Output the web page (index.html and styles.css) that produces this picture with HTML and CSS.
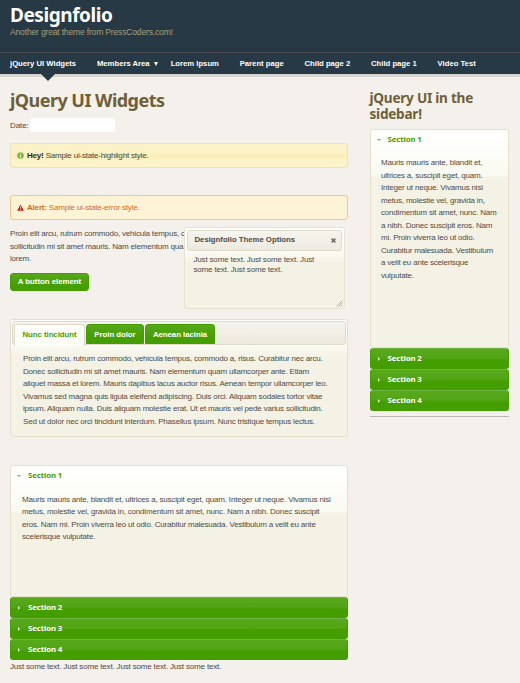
FILE: index.html
```html
<!DOCTYPE html>
<html lang="en">
<head>
<meta charset="utf-8">
<title>jQuery UI Widgets</title>
<link rel="stylesheet" href="styles.css">
</head>
<body>
<header class="header">
  <div class="site-title">Designfolio</div>
  <div class="tagline">Another great theme from PressCoders.com!</div>
</header>
<nav class="nav">
  <a class="current">jQuery UI Widgets</a><a class="members">Members Area<i class="arrow"></i></a><a>Lorem Ipsum</a><a>Parent page</a><a>Child page 2</a><a>Child page 1</a><a>Video Test</a>
</nav>
<div class="page">
  <main class="main">
    <h1>jQuery UI Widgets</h1>
    <div class="date"><span>Date:</span><div class="field"></div></div>
    <div class="notice highlight"><svg class="notice-icon" viewBox="0 0 7 7"><circle cx="3.5" cy="3.5" r="3.3" fill="#7fb84a"/><path d="M3.5 1.2v1M3.5 3v2.5" stroke="#fbf3c8" stroke-width="1"/></svg><span><b>Hey!</b> Sample ui-state-highlight style.</span></div>
    <div class="notice error"><svg class="notice-icon" viewBox="0 0 7 7"><path d="M3.5 .4 6.9 6.7H.1z" fill="#cd1a16"/><path d="M3.5 2.5v2M3.5 5v.9" stroke="#fff4d4" stroke-width=".8"/></svg><span><b>Alert:</b> Sample ui-state-error style.</span></div>
    <div class="intro">
      <p>Proin elit arcu, rutrum commodo, vehicula tempus, c<br>sollicitudin mi sit amet mauris. Nam elementum qua<br>lorem.</p>
      <div class="dialog">
        <div class="dialog-title"><span>Designfolio Theme Options</span><svg class="close" viewBox="0 0 5 5"><path d="M.6.6 4.4 4.4M4.4.6.6 4.4" stroke="#716d64" stroke-width="1.5"/></svg></div>
        <div class="dialog-body">Just some text. Just some text. Just<br>some text. Just some text.</div>
        <svg class="grip" viewBox="0 0 7 7"><path d="M.5 6.5 6.5.5M2.7 6.5 6.5 2.7M4.9 6.5 6.5 4.9" stroke="#a5a298" stroke-width=".8"/></svg>
      </div>
    </div>
    <div class="button">A button element</div>
    <section class="tabs">
      <div class="tab-bar"><div class="tab active">Nunc tincidunt</div><div class="tab second">Proin dolor</div><div class="tab third">Aenean lacinia</div></div>
      <p>Proin elit arcu, rutrum commodo, vehicula tempus, commodo a, risus. Curabitur nec arcu.<br>Donec sollicitudin mi sit amet mauris. Nam elementum quam ullamcorper ante. Etiam<br>aliquet massa et lorem. Mauris dapibus lacus auctor risus. Aenean tempor ullamcorper leo.<br>Vivamus sed magna quis ligula eleifend adipiscing. Duis orci. Aliquam sodales tortor vitae<br>ipsum. Aliquam nulla. Duis aliquam molestie erat. Ut et mauris vel pede varius sollicitudin.<br>Sed ut dolor nec orci tincidunt interdum. Phasellus ipsum. Nunc tristique tempus lectus.</p>
    </section>
    <section class="accordion">
      <div class="panel">
        <h3><i class="down"></i>Section 1</h3>
        <p>Mauris mauris ante, blandit et, ultrices a, suscipit eget, quam. Integer ut neque. Vivamus nisi<br>metus, molestie vel, gravida in, condimentum sit amet, nunc. Nam a nibh. Donec suscipit<br>eros. Nam mi. Proin viverra leo ut odio. Curabitur malesuada. Vestibulum a velit eu ante<br>scelerisque vulputate.</p>
      </div>
      <h3 class="bar"><i class="right"></i>Section 2</h3>
      <h3 class="bar"><i class="right"></i>Section 3</h3>
      <h3 class="bar"><i class="right"></i>Section 4</h3>
    </section>
    <div class="after">Just some text. Just some text. Just some text. Just some text.</div>
  </main>
  <aside class="sidebar">
    <h2><span>jQuery UI in the</span><span>sidebar!</span></h2>
    <section class="accordion">
      <div class="panel">
        <h3><i class="down"></i>Section 1</h3>
        <p>Mauris mauris ante, blandit et,<br>ultrices a, suscipit eget, quam.<br>Integer ut neque. Vivamus nisi<br>metus, molestie vel, gravida in,<br>condimentum sit amet, nunc. Nam<br>a nibh. Donec suscipit eros. Nam<br>mi. Proin viverra leo ut odio.<br>Curabitur malesuada. Vestibulum<br>a velit eu ante scelerisque<br>vulputate.</p>
      </div>
      <h3 class="bar"><i class="right"></i>Section 2</h3>
      <h3 class="bar"><i class="right"></i>Section 3</h3>
      <h3 class="bar"><i class="right"></i>Section 4</h3>
    </section>
    <div class="rule"></div>
  </aside>
</div>
</body>
</html>
```
FILE: styles.css
```css
* { box-sizing: border-box; }
body {
  margin: 0;
  height: 683px;
  overflow: hidden;
  background: #f4f0ec;
  color: #4f4b45;
  font: 8px/12.5px "Liberation Sans", Arial, sans-serif;
  letter-spacing: -.19px;
  white-space: nowrap;
}
h1, h2, h3, p { margin: 0; }
.header { height: 52px; padding: 4px 10px 0; background: #263944; }
.site-title { height: 22px; font: 700 19px/23px "Noto Sans", sans-serif; letter-spacing: -.45px; color: #fff; }
.tagline { height: 12px; font-size: 8.6px; line-height: 12px; letter-spacing: -.2px; color: #a59d7c; }
.nav {
  display: flex;
  padding-left: 10px;
  background: #263944;
  border-top: 1px solid #4b4a4e;
  border-bottom: 3px solid #d6d5d1;
  box-sizing: content-box;
  height: 21px;
  font-weight: 700;
  font-size: 7.7px;
  letter-spacing: 0;
  line-height: 21px;
  color: #fff;
}
.nav a { margin-right: 20.8px; }
.nav .current { position: relative; }
.current::after {
  content: "";
  position: absolute;
  left: 31px;
  top: 21px;
  border: 7px solid transparent;
  border-top-color: #263944;
  border-bottom: 0;
}
.nav .members { margin-right: 13px; }
.arrow { display: inline-block; margin-left: 4px; border: 2.5px solid transparent; border-top: 4px solid #fff; border-bottom: 0; }
.page { display: flex; gap: 21.5px; padding: 0 11px 0 10px; }
.main { width: 338px; }
h1 { height: 24px; margin-top: 11px; font: 700 18px/25px "Noto Sans", sans-serif; letter-spacing: -.53px; color: #6f5f38; }
.date { display: flex; align-items: center; gap: 2px; height: 14px; margin-top: 6px; }
.date span { width: 18px; padding-top: 2px; letter-spacing: -.1px; }
.field { width: 85px; height: 14px; background: #fff; border-radius: 3px; }
.notice { display: flex; align-items: center; gap: 3px; height: 25px; padding-left: 6px; border-radius: 3px; }
.notice span { padding-top: 1px; }
.notice-icon { width: 7px; height: 7px; }
.highlight { margin-top: 11px; border: 1px solid #ece2bc; background: linear-gradient(#fbf2c8 0 35%, #fcedb4 55%, #fbf3ca 70%); color: #4b463b; }
.highlight b { color: #2e2b24; }
.error { margin-top: 27px; border: 1px solid #edc98c; background: #fef4d5; color: #d36b1c; }
.intro { position: relative; height: 38px; margin-top: 8px; }
.dialog {
  position: absolute;
  left: 173.5px;
  top: -1px;
  width: 161px;
  height: 82px;
  padding: 2px;
  border: 1px solid #e6e2cf;
  border-radius: 3px;
  background: linear-gradient(#fff 0, #fcfcf6 22px, #f4f2e4 36px);
}
.dialog-title { display: flex; justify-content: space-between; align-items: center; height: 21px; padding: 0 5px 0 7px; border: 1px solid #dedbc8; border-radius: 3px; background: linear-gradient(#f6f4ef, #edebe0); font-weight: 700; font-size: 7.8px; letter-spacing: -.03px; }
.close { width: 5px; height: 5px; }
.dialog-body { padding: 4px 7px; line-height: 10px; letter-spacing: -.17px; }
.grip { position: absolute; right: 1px; bottom: 1px; width: 7px; height: 7px; }
.button { width: 79px; height: 18px; margin-top: 7px; border: 1px solid #459e00; border-radius: 3px; background: linear-gradient(#56a71a, #459e00 75%); color: #fff; font-weight: 700; font-size: 7.9px; letter-spacing: -.05px; line-height: 16px; text-align: center; }
.tabs { height: 118px; margin-top: 28px; padding: 1px; border: 1px solid #e5e0cc; border-radius: 3px; background: linear-gradient(#fff 0, #fcfcf6 22px, #f4f2e4 38px); }
.tab-bar { display: flex; gap: 1px; height: 24px; padding: 2px 0 0 1px; border: 1px solid #dedbc8; border-radius: 3px; background: linear-gradient(#f6f4ef, #eceadd); font-size: 7.8px; letter-spacing: -.03px; }
.tab { height: 20px; border: 1px solid #459e00; border-radius: 3px 3px 0 0; background: linear-gradient(#56a71a, #459e00 75%); color: #fff; font-weight: 700; line-height: 19px; text-align: center; }
.active { width: 71px; height: 22px; border-color: #dedbc8; border-bottom: 0; background: #fdfdf9; color: #459e00; }
.second { width: 58px; }
.third { width: 70px; }
.tabs p { padding: 8px 11px; }
.accordion h3 { display: flex; align-items: center; font: 700 7.8px/19px "Noto Sans", sans-serif; letter-spacing: -.1px; }
.main .accordion { margin-top: 28px; }
.panel { height: 132px; border: 1px solid #e4e0cb; border-radius: 3px; background: linear-gradient(#fff 0, #f9faf1 45px, #f4f2e4 48px); }
.panel h3 { height: 19px; color: #459e00; }
.panel p { padding: 8.5px 11px; }
.down { width: 0; margin: 0 7px 0 6px; border: 2px solid transparent; border-top: 2px solid #7cb850; border-bottom: 0; }
.bar { height: 21px; border: 1px solid #459e00; border-top-color: #6fb341; border-radius: 3px; background: linear-gradient(#58a81c, #52a516 45%, #459e00 60%); color: #fff; }
.right { width: 0; margin: 0 8px 0 7px; border: 2px solid transparent; border-left: 2.5px solid #e2f1d5; border-right: 0; }
.after { padding-top: 1px; letter-spacing: -.17px; }
.sidebar { width: 139px; }
.sidebar h2 { display: flex; flex-direction: column; height: 32px; margin-top: 13px; font: 700 13.6px/15px "Noto Sans", sans-serif; letter-spacing: -.25px; color: #6f5f38; gap: 1px; }
.sidebar h2 span { height: 15px; }
.sidebar .accordion { margin-top: 7px; }
.sidebar .panel { height: 219px; }
.sidebar .panel p { padding: 8px 10.5px; }
.rule { height: 1px; margin-top: 5px; background: #b9b8b4; }
```
